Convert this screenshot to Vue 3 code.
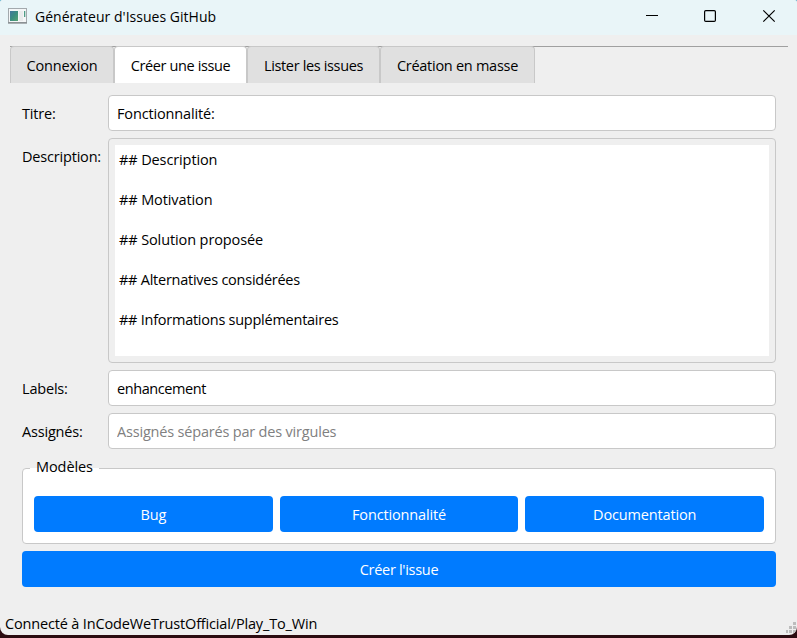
<script setup>
import { ref } from 'vue'

const tabs = [
  { name: 'Connexion', cls: 'tab-connection' },
  { name: 'Créer une issue', cls: 'tab-create' },
  { name: 'Lister les issues', cls: 'tab-list' },
  { name: 'Création en masse', cls: 'tab-bulk' },
]
const active = ref('Créer une issue')
const title = ref('Fonctionnalité:')
const labels = ref('enhancement')
const assignees = ref('')
const templates = ['Bug', 'Fonctionnalité', 'Documentation']
const description = [
  '## Description',
  '## Motivation',
  '## Solution proposée',
  '## Alternatives considérées',
  '## Informations supplémentaires',
]
</script>

<template>
  <div class="desktop">
    <div class="window">
      <header class="titlebar">
        <svg class="app-icon" width="19" height="16" viewBox="0 0 19 16">
          <rect x="0.5" y="0.5" width="18" height="14.5" fill="#f4f6f7" stroke="#a3a9ad" />
          <rect x="0" y="14" width="19" height="1.5" fill="#8b9194" />
          <rect x="2" y="3" width="8" height="10" fill="url(#pane)" />
          <rect x="11" y="3" width="4" height="10" fill="#e9ebec" />
          <rect x="16" y="3" width="1.3" height="6" fill="#4f9c86" />
          <defs>
            <linearGradient id="pane" x1="0" y1="0" x2="1" y2="1">
              <stop offset="0" stop-color="#4475a0" />
              <stop offset="0.5" stop-color="#3c8d80" />
              <stop offset="1" stop-color="#58a373" />
            </linearGradient>
          </defs>
        </svg>
        <span class="caption">Générateur d'Issues GitHub</span>
        <svg class="controls" width="130" height="14" viewBox="0 0 130 14">
          <path d="M0 6.5H12" stroke="#000" fill="none" />
          <rect x="58.6" y="1.6" width="10.8" height="10.8" rx="1.2" stroke="#000" stroke-width="1.2" fill="none" />
          <path d="M117.3 1.3L128.7 12.7M128.7 1.3L117.3 12.7" stroke="#000" stroke-width="1.2" fill="none" />
        </svg>
      </header>

      <nav class="tabs">
        <button
          v-for="tab in tabs"
          :key="tab.name"
          class="tab"
          :class="[tab.cls, { active: tab.name === active }]"
          @click="active = tab.name"
        >{{ tab.name }}</button>
      </nav>

      <main class="form">
        <div class="row">
          <label>Titre:</label>
          <input v-model="title" class="field f-title" />
        </div>
        <div class="row tall">
          <label>Description:</label>
          <div class="editor">
            <div class="text" contenteditable="true" spellcheck="false">
              <p v-for="line in description" :key="line" :class="{ long: line.length > 22 }">{{ line }}</p>
            </div>
          </div>
        </div>
        <div class="row">
          <label>Labels:</label>
          <input v-model="labels" class="field f-labels" />
        </div>
        <div class="row">
          <label>Assignés:</label>
          <input v-model="assignees" class="field f-assign" placeholder="Assignés séparés par des virgules" />
        </div>

        <section class="group">
          <h2 class="legend">Modèles</h2>
          <button v-for="t in templates" :key="t" class="primary">{{ t }}</button>
        </section>
        <button class="primary submit">Créer l'issue</button>
      </main>

      <footer class="status">
        <span>Connecté à InCodeWeTrustOfficial/Play_To_Win</span>
        <svg class="grip" width="11" height="12" viewBox="0 0 11 12" fill="#bdbdbd">
          <path d="M7 0h3v3h-3zM3 4h3v3h-3zM7 4h3v3h-3zM0 8h2v3h-2zM3 8h3v3h-3zM7 8h3v3h-3z" />
        </svg>
      </footer>
    </div>
  </div>
</template>

<style>
body { margin: 0; overflow: hidden; }
</style>

<style scoped>
* { box-sizing: border-box; }
.desktop {
  width: 797px;
  height: 638px;
  background: linear-gradient(#67b6cf 0 20px, #2b0b10 20px);
  font: 14.5px/20px "Open Sans", "Noto Sans", sans-serif;
  color: #000;
}
.window {
  width: 797px;
  height: 635px;
  display: flex;
  flex-direction: column;
  background: #efefef;
  border-radius: 3px 3px 8px 8px;
  overflow: hidden;
}
button, input { font: inherit; color: inherit; margin: 0; outline: none; }
.titlebar {
  height: 35px;
  flex: none;
  display: flex;
  align-items: center;
  padding: 0 22px 3px 8px;
  background: #e9f5f8;
}
.caption { margin-left: 8px; font-size: 14px; letter-spacing: 0.02px; padding-top: 2px; }
.controls { margin-left: auto; margin-right: -1px; }
.tabs {
  height: 37px;
  flex: none;
  margin: 11px 9px 0 10px;
  display: flex;
  border-top: 1px solid #a0a0a0;
}
.tab {
  height: 37px;
  margin-top: -1px;
  padding: 2px 0 0;
  border: 1px solid #c8c8c8;
  border-bottom: 0;
  border-radius: 4px 4px 0 0;
  background: #e0e0e0;
  white-space: nowrap;
}
.tab.active { background: #fff; }
.tab-connection { width: 104px; letter-spacing: -0.2px; }
.tab-create { width: 133px; letter-spacing: -0.38px; }
.tab-list { width: 133px; letter-spacing: -0.35px; }
.tab-bulk { width: 155px; letter-spacing: -0.27px; }
.form {
  padding: 12px 21px 0 22px;
  display: flex;
  flex-direction: column;
  gap: 7px;
}
.row { display: flex; height: 36px; align-items: center; }
.row label { width: 86px; flex: none; white-space: nowrap; padding-top: 1px; letter-spacing: -0.19px; }
.row.tall { height: 225px; align-items: stretch; }
.row.tall label { padding-top: 9px; }
.field {
  flex: 1;
  height: 36px;
  padding: 1px 8px 0;
  border: 1px solid #c8c8c8;
  border-radius: 4px;
  background: #fff;
}
.f-title { letter-spacing: -0.14px; }
.f-labels { letter-spacing: -0.42px; }
.f-assign { letter-spacing: -0.19px; }
.field::placeholder { color: #808080; opacity: 1; }
.editor { flex: 1; padding: 6px; border: 1px solid #c8c8c8; border-radius: 4px; display: flex; }
.text {
  flex: 1;
  padding: 5px 4px;
  background: #fff;
  overflow: hidden;
  outline: none;
}
.text p { margin: 0 0 20px; letter-spacing: -0.11px; }
.text p.long { letter-spacing: -0.25px; }
.group {
  position: relative;
  height: 76px;
  margin-top: 12px;
  padding: 27px 11px 11px;
  display: flex;
  gap: 7px;
  border: 1px solid #c8c8c8;
  border-radius: 4px;
  background: #fff;
}
.legend {
  position: absolute;
  left: 7px;
  top: -12px;
  margin: 0;
  padding: 0 6px;
  font: inherit;
  letter-spacing: -0.08px;
  background: linear-gradient(#efefef 0 11px, #fff 11px);
}
.primary {
  flex: 1;
  height: 36px;
  padding: 1px 0 0;
  border: 0;
  border-radius: 4px;
  background: #007bff;
  color: #fff;
  letter-spacing: -0.15px;
}
.submit { flex: none; letter-spacing: -0.3px; }
.status {
  margin-top: auto;
  height: 22px;
  display: flex;
  justify-content: space-between;
  align-items: flex-start;
  padding-left: 5px;
  letter-spacing: -0.16px;
}
.status span { padding-top: 1px; }
.grip { margin-top: 9px; }
</style>
